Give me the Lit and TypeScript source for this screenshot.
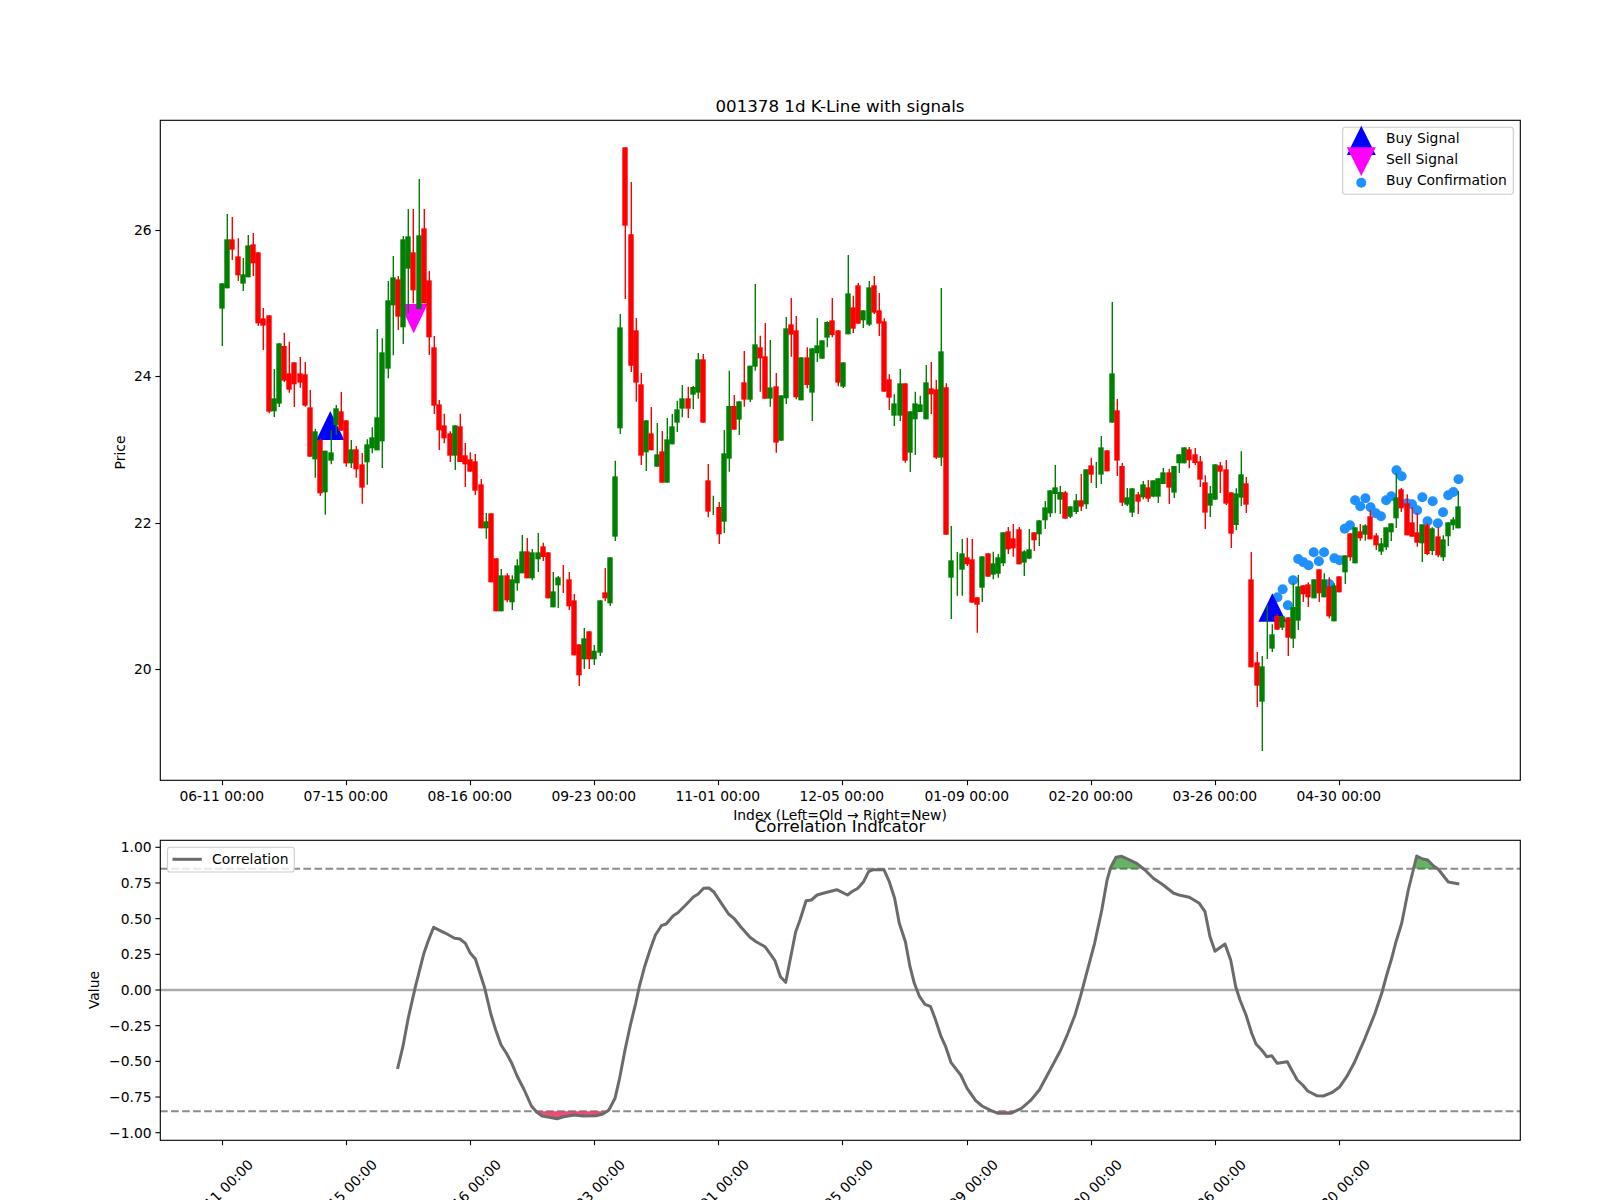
import { LitElement, html, svg, css } from "lit";
import { customElement } from "lit/decorators.js";

type C = [string, number, number, number, number];
// [colour, wick top, body top, body bottom, wick bottom] in units of 1/3 px from y=90
const CANDLES: C[] = [
["g",580,580,656,768],["g",372,448,595,595],["r",381,448,479,510],["r",445,499,556,573],["g",504,553,581,603],
["g",435,466,562,562],["r",429,463,520,558],["r",487,487,700,708],["r",654,685,707,780],["r",676,676,965,970],
["g",837,925,964,981],["g",760,760,941,951],["r",728,768,872,876],["r",755,850,899,908],["r",817,817,883,951],
["r",801,850,878,893],["r",816,853,947,950],["r",900,952,1100,1100],["g",1016,1024,1108,1163],["r",1046,1050,1210,1217],
["g",1082,1082,1207,1274],["g",1020,1087,1112,1123],["g",945,955,1005,1035],["r",906,964,1022,1022],["r",991,991,1120,1130],
["g",1050,1078,1120,1134],["r",1068,1078,1138,1163],["r",1089,1123,1193,1241],["g",1048,1063,1117,1184],["g",1012,1042,1075,1090],
["g",717,982,1081,1081],["g",745,787,1054,1134],["g",573,631,836,865],["g",498,562,646,796],["r",558,568,680,720],
["g",438,448,712,762],["g",357,439,536,670],["r",357,487,601,640],["g",267,436,657,657],["r",357,415,640,640],
["r",543,571,742,795],["r",738,772,947,972],["r",930,943,1021,1080],["r",971,1006,1045,1060],["r",1024,1030,1097,1116],
["g",1006,1006,1097,1140],["r",971,1009,1116,1116],["r",1059,1096,1123,1191],["r",1087,1108,1145,1145],["r",1092,1114,1202,1215],
["r",1167,1183,1315,1315],["g",1269,1294,1315,1346],["r",1270,1270,1477,1477],["r",1405,1405,1564,1564],["g",1437,1456,1564,1564],
["r",1450,1456,1531,1537],["g",1456,1468,1537,1560],["g",1408,1426,1480,1502],["g",1335,1384,1450,1450],["r",1344,1384,1465,1465],
["g",1377,1387,1465,1471],["g",1329,1387,1408,1446],["r",1358,1369,1401,1413],["r",1387,1387,1525,1525],["g",1446,1504,1552,1552],
["g",1458,1462,1486,1554],["r",1425,1425,1425,1509],["r",1446,1468,1549,1560],["r",1512,1531,1696,1696],["r",1663,1663,1756,1788],
["g",1614,1645,1708,1737],["r",1624,1624,1708,1737],["g",1665,1682,1708,1725],["g",1531,1531,1688,1698],["r",1434,1507,1525,1534],
["g",1402,1402,1540,1548],["g",1112,1159,1340,1353],["g",672,712,1015,1032],["r",172,172,407,627],["r",276,433,827,846],
["r",684,721,878,935],["r",849,883,1097,1125],["g",991,991,1087,1143],["r",951,1030,1081,1081],["g",999,1093,1130,1130],
["r",1023,1084,1178,1178],["g",984,1048,1178,1178],["g",972,1009,1063,1063],["g",932,958,998,1026],["g",885,925,956,982],
["r",890,925,956,984],["g",888,891,914,957],["g",789,808,908,926],["r",792,808,998,998],["r",1122,1171,1265,1282],
["g",1217,1217,1217,1275],["r",1236,1251,1333,1362],["g",1020,1090,1295,1329],["g",842,948,1106,1145],["r",915,948,1019,1019],
["g",934,934,989,1035],["r",783,877,929,950],["g",827,827,929,936],["g",582,763,830,842],["r",737,772,805,905],
["r",699,799,926,926],["g",750,892,926,950],["r",849,889,1058,1088],["g",916,916,1052,1052],["g",681,715,925,942],
["r",624,703,734,800],["r",678,721,922,928],["g",802,802,931,931],["r",772,802,885,895],["g",775,775,908,993],
["g",684,766,790,816],["g",751,751,806,806],["g",694,696,743,772],["r",624,691,735,742],["r",721,721,878,889],
["g",817,817,890,894],["g",495,610,733,733],["r",617,652,716,729],["r",579,586,701,701],["g",661,661,691,714],
["g",573,592,704,708],["r",558,586,668,672],["r",609,661,701,738],["r",685,694,905,905],["r",853,868,923,960],
["g",913,940,977,1008],["g",837,880,977,993],["r",880,880,1112,1118],["g",964,964,1088,1146],["g",905,940,988,1095],
["g",917,943,966,966],["g",825,877,988,988],["r",816,895,913,972],["r",870,898,1103,1107],["g",594,784,1103,1128],
["r",880,892,1334,1334],["g",1308,1411,1463,1587],["g",1386,1386,1386,1517],["g",1347,1390,1439,1517],["r",1343,1402,1423,1428],
["r",1347,1408,1538,1538],["r",1522,1522,1544,1628],["g",1399,1399,1493,1536],["r",1390,1390,1460,1460],["g",1385,1420,1454,1468],
["g",1392,1402,1451,1463],["g",1327,1327,1420,1428],["r",1311,1324,1378,1392],["r",1302,1345,1375,1400],["r",1311,1318,1423,1423],
["g",1381,1384,1418,1458],["g",1317,1378,1406,1406],["r",1327,1327,1351,1383],["g",1291,1291,1333,1368],["g",1233,1252,1291,1317],
["g",1201,1201,1270,1281],["g",1125,1192,1212,1270],["g",1188,1206,1229,1272],["r",1203,1207,1286,1286],["g",1249,1249,1280,1284],
["g",1212,1231,1266,1272],["r",1152,1231,1250,1263],["g",1138,1138,1243,1257],["r",1103,1126,1154,1179],["g",1116,1116,1116,1194],
["g",1038,1072,1154,1182],["r",1081,1081,1144,1144],["g",636,850,998,998],["r",927,961,1112,1158],["r",1119,1128,1238,1248],
["g",1194,1222,1244,1248],["g",1195,1195,1268,1281],["r",1206,1213,1235,1272],["g",1173,1183,1222,1228],["r",1170,1192,1226,1236],
["g",1171,1171,1220,1222],["g",1165,1165,1220,1239],["g",1134,1147,1182,1182],["r",1137,1147,1193,1242],["g",1128,1128,1208,1224],
["g",1093,1093,1120,1149],["g",1072,1072,1120,1120],["r",1071,1078,1111,1135],["r",1074,1093,1119,1125],["r",1098,1114,1169,1191],
["r",1156,1177,1268,1317],["g",1188,1210,1247,1281],["g",1123,1123,1229,1229],["r",1116,1126,1145,1209],["r",1110,1138,1241,1245],
["r",1207,1207,1331,1374],["g",1195,1210,1305,1320],["g",1084,1153,1223,1248],["r",1161,1180,1244,1269],["r",1386,1468,1732,1732],
["r",1686,1717,1787,1851],["g",1698,1729,1835,1983],["g",1545,1545,1545,1707],["g",1603,1633,1676,1686],["r",1572,1578,1619,1619],
["g",1578,1578,1613,1620],["r",1582,1582,1643,1698],["g",1480,1551,1646,1674],["g",1455,1489,1592,1620],["r",1486,1486,1513,1536],
["r",1477,1483,1522,1551],["g",1468,1468,1525,1525],["r",1438,1438,1510,1536],["g",1450,1468,1522,1522],["r",1462,1489,1579,1585],
["g",1480,1486,1594,1594],["r",1459,1459,1507,1507],["g",1396,1396,1447,1482],["r",1330,1330,1402,1412],["g",1312,1312,1420,1420],
["r",1302,1324,1345,1352],["g",1303,1306,1334,1352],["r",1261,1279,1348,1348],["r",1330,1336,1366,1380],["g",1344,1360,1385,1395],
["g",1312,1312,1372,1380],["g",1300,1300,1327,1353],["g",1150,1222,1285,1314],["r",1194,1198,1255,1266],["r",1213,1240,1336,1336],
["r",1252,1297,1340,1340],["r",1270,1327,1358,1370],["g",1303,1303,1360,1416],["r",1300,1306,1392,1396],["g",1312,1315,1383,1395],
["r",1312,1339,1396,1402],["g",1336,1348,1402,1413],["g",1297,1297,1339,1368],["g",1282,1288,1306,1320],["g",1203,1249,1315,1315],
];
// confirmation dots, index 204..239: y in units of 1/3 px from y=430
const DOTS = [502,478,526,451,387,397,406,367,394,367,462,385,391,296,286,211,229,205,232,250,259,211,199,121,139,220,223,241,202,274,214,280,247,196,186,148];

const Y = (v: number) => 90 + v / 3;
const X = (i: number) => 222.2 + 5.173 * i;
const TICK_X = [0,1,2,3,4,5,6,7,8,9].map((i) => Math.floor(X(i * 24)) + 0.5);
const TICK_L = ["06-11","07-15","08-16","09-23","11-01","12-05","01-09","02-20","03-26","04-30"].map((s) => s + " 00:00");

const A: number[][] = [[945,897],[960,830],[975,745],[995,650],[1018,553],[1030,515],[1046,472],[1080,490],[1105,505],[1120,507],[1135,520],[1148,548],[1163,567],[1188,650],[1207,735],[1220,780],[1235,825],[1250,850],[1265,880],[1280,918],[1300,960],[1320,1008],[1335,1027],[1350,1038],[1370,1042],[1392,1046],[1410,1040],[1440,1035],[1465,1038],[1500,1037],[1520,1032]];
const B: number[][] = [[25,1020],[42,985],[55,925],[70,840],[85,765],[100,700],[110,650],[125,590],[140,540],[155,495],[172,467],[185,462],[205,437],[218,428],[240,405],[262,380],[275,372],[290,355],[305,354],[318,365],[340,400],[360,432],[375,445],[395,472],[420,502],[437,515],[462,530],[490,572],[505,620],[520,637],[548,485],[560,450],[577,392],[592,390],[608,375],[630,368],[663,359],[693,375],[705,365],[722,355],[738,335],[752,305],[765,299],[795,299],[810,335],[825,385],[838,460],[855,515],[868,590],[880,640],[895,680],[910,703],[925,709],[938,745],[955,800],[968,830],[983,878],[1010,915],[1028,955],[1052,992],[1070,1008],[1095,1022],[1115,1030],[1150,1030],[1180,1015],[1205,992],[1230,960],[1265,890],[1290,840],[1310,790],[1330,735],[1345,680],[1360,620],[1385,520],[1405,420],[1420,330]];
const D: number[][] = [[33,290],[48,262],[65,259],[85,268],[110,280],[135,300],[160,325],[190,345],[220,369],[240,376],[268,382],[298,400],[315,425],[330,500],[345,544],[375,522],[392,570],[407,650],[420,690],[438,735],[455,790],[468,822],[485,840],[500,860],[515,857],[532,880],[562,875],[575,900],[592,930],[608,945],[623,963],[650,977],[670,978],[695,968],[718,952],[740,920],[762,880],[795,805],[825,730],[845,670],[860,615],[875,565],[888,515],[905,460],[925,360],[950,258],[968,267],[983,270],[1000,287],[1015,298],[1045,336],[1078,342]];
const LINE = [
  ...A.map(([x, y]) => [60 + x / 2.8, 770 + y / 3]),
  ...B.map(([x, y]) => [600 + x / 2.8, 770 + y / 3]),
  ...D.map(([x, y]) => [1100 + x / 3, 770 + y / 3]),
].map((p) => p.map((n) => n.toFixed(1)).join(",")).join(" ");

const lowY = (v: number) => 990 - 142.7 * v;
const LOW_TICKS = [
  [1, "1.00"], [0.75, "0.75"], [0.5, "0.50"], [0.25, "0.25"], [0, "0.00"],
  [-0.25, "\u22120.25"], [-0.5, "\u22120.50"], [-0.75, "\u22120.75"], [-1, "\u22121.00"],
] as [number, string][];
const UP_TICKS = [[26, 230.5], [24, 376.5], [22, 523.5], [20, 669.5]];

const up = (cx: number, top: number, bottom: number, w = 14) => `${cx},${top} ${cx + w},${bottom} ${cx - w},${bottom}`;
const down = (cx: number, top: number, bottom: number, w = 14) => `${cx - w},${top} ${cx + w},${top} ${cx},${bottom}`;

@customElement("app-root")
export class AppRoot extends LitElement {
  static styles = css`
    :host { display: block; width: 1600px; height: 1200px; background: #fff; overflow: hidden; }
    svg { display: block; }
    text { font-family: "DejaVu Sans", sans-serif; font-size: 13.89px; fill: #000; }
    .title { font-size: 16.67px; text-anchor: middle; }
    .mid { text-anchor: middle; }
    .end { text-anchor: end; }
    .spine { fill: none; stroke: #000; stroke-width: 1.11; }
    .tick { stroke: #000; stroke-width: 1.11; }
    .g { stroke: #008000; }
    .r { stroke: #ff0000; }
    .wick { stroke-width: 1.4; }
    .body { stroke-width: 5.4; }
    .dot { fill: #1e90ff; }
    .buy { fill: #0000ff; }
    .sell { fill: #ff00ff; }
    .frame { fill: #fff; fill-opacity: 0.8; stroke: #ccc; stroke-width: 1.11; }
    .zero { stroke: #aaaaaa; stroke-width: 2.4; }
    .dash { stroke: #808080; stroke-opacity: 0.9; stroke-width: 2.08; stroke-dasharray: 7.7 3.33; }
    .corr { fill: none; stroke: #6b6b6b; stroke-width: 3; stroke-linejoin: round; }
    .corr-sample { stroke: #6b6b6b; stroke-width: 3; }
    .fill-hi { fill: #008000; fill-opacity: 0.6; }
    .fill-lo { fill: #e8305a; fill-opacity: 0.85; }
  `;

  render() {
    return html`<svg width="1600" height="1200" viewBox="0 0 1600 1200" xmlns="http://www.w3.org/2000/svg">
      <defs>
        <clipPath id="hi"><rect x="160" y="840" width="1360" height="28.7"></rect></clipPath>
        <clipPath id="lo"><rect x="160" y="1111.3" width="1360" height="28.7"></rect></clipPath>
      </defs>
      ${this.upper()}
      ${this.lower()}
    </svg>`;
  }

  upper() {
    return svg`
      ${DOTS.map((v, k) => svg`<circle class="dot" cx=${X(204 + k)} cy=${430 + v / 3} r="5"></circle>`)}
      <polygon class="buy" points=${up(330.3, 411, 440)}></polygon>
      <polygon class="sell" points=${down(413.7, 304, 333.3)}></polygon>
      <polygon class="buy" points=${up(1272.3, 593.3, 621.7)}></polygon>
      ${CANDLES.map(([c, wt, bt, bb, wb], i) => {
        const x = Math.round(X(i) - 0.2);
        return svg`<line class="wick ${c}" x1=${x + 0.3} x2=${x + 0.3} y1=${Y(wt)} y2=${Y(wb)}></line>
          ${bb > bt ? svg`<line class="body ${c}" x1=${x} x2=${x} y1=${Y(bt)} y2=${Y(bb)}></line>` : ""}`;
      })}
      <rect class="spine" x="160.3" y="120.3" width="1360" height="660"></rect>
      ${TICK_X.map((x, i) => svg`
        <line class="tick" x1=${x} x2=${x} y1="780.3" y2="785.2"></line>
        <text class="mid" x=${x - 0.7} y="801">${TICK_L[i]}</text>`)}
      ${UP_TICKS.map(([v, y]) => svg`
        <line class="tick" x1="155.4" x2="160.3" y1=${y} y2=${y}></line>
        <text class="end" x="151.6" y=${y + 4.7}>${v}</text>`)}
      <text class="title" x="840" y="111.7">001378 1d K-Line with signals</text>
      <text class="mid" x="840" y="820">Index (Left=Old \u2192 Right=New)</text>
      <text class="mid" transform="translate(125 452.5) rotate(-90)">Price</text>
      <rect class="frame" x="1342.7" y="127.3" width="170.6" height="67" rx="2.8"></rect>
      <polygon class="buy" points=${up(1361.3, 125.7, 155, 14.5)}></polygon>
      <polygon class="sell" points=${down(1361.3, 147.3, 176, 14.5)}></polygon>
      <circle class="dot" cx="1361.3" cy="182.7" r="5"></circle>
      <text x="1386" y="143.3">Buy Signal</text>
      <text x="1386" y="164.3">Sell Signal</text>
      <text x="1386" y="185.3">Buy Confirmation</text>`;
  }

  lower() {
    return svg`
      <line class="zero" x1="160" x2="1520" y1="990" y2="990"></line>
      <line class="dash" x1="160" x2="1520" y1="868.7" y2="868.7"></line>
      <line class="dash" x1="160" x2="1520" y1="1111.3" y2="1111.3"></line>
      <polygon class="fill-hi" clip-path="url(#hi)" points=${LINE}></polygon>
      <polygon class="fill-lo" clip-path="url(#lo)" points=${LINE}></polygon>
      <polyline class="corr" points=${LINE}></polyline>
      <rect class="spine" x="160.3" y="840.3" width="1360" height="300"></rect>
      ${TICK_X.map((x, i) => svg`
        <line class="tick" x1=${x} x2=${x} y1="1140.3" y2="1145.2"></line>
        <text class="mid" dominant-baseline="central" transform="translate(${x - 2} 1192) rotate(-45)">${TICK_L[i]}</text>`)}
      ${LOW_TICKS.map(([v, l]) => svg`
        <line class="tick" x1="155.4" x2="160.3" y1=${lowY(v)} y2=${lowY(v)}></line>
        <text class="end" x="151.6" y=${lowY(v) + 5.1}>${l}</text>`)}
      <text class="title" x="840" y="831.7">Correlation Indicator</text>
      <text class="mid" transform="translate(99 990) rotate(-90)">Value</text>
      <rect class="frame" x="167.5" y="847.3" width="126.8" height="24.7" rx="2.8"></rect>
      <line class="corr-sample" x1="172.5" x2="201.8" y1="859.3" y2="859.3"></line>
      <text x="212" y="864">Correlation</text>`;
  }
}
